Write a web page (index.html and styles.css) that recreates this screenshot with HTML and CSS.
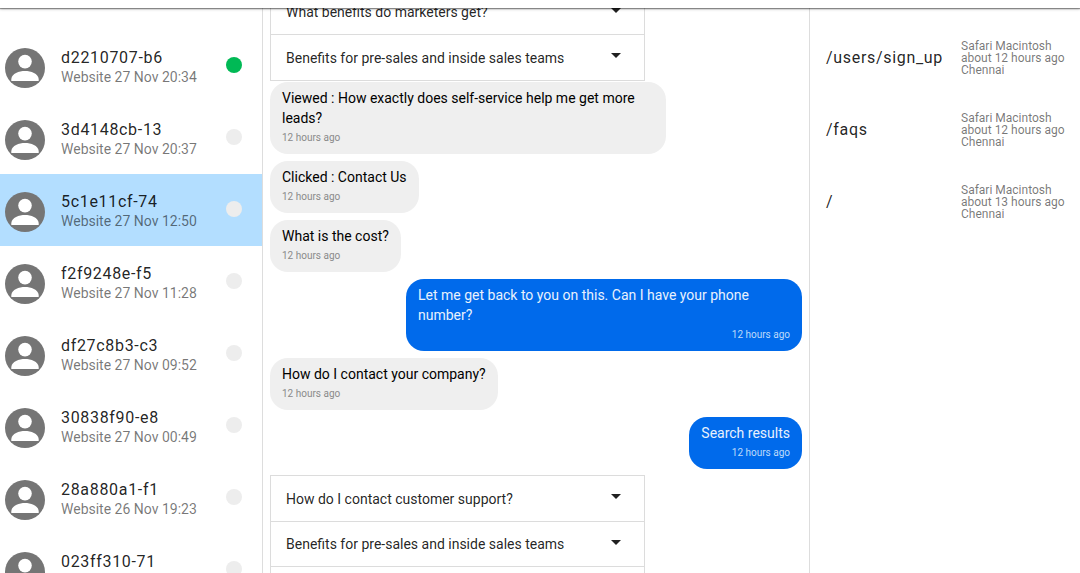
FILE: index.html
```html
<!DOCTYPE html>
<html lang="en">
<head>
<meta charset="utf-8">
<title>Conversations</title>
<link rel="stylesheet" href="styles.css">
</head>
<body>
<svg class="defs" aria-hidden="true">
  <symbol id="avatar" viewBox="0 0 40 40">
    <circle cx="20" cy="20" r="20" fill="#757575"/>
    <circle cx="20" cy="13.6" r="6.8" fill="#fff"/>
    <path d="M6.3 33v-2C6.8 25.6 14 23 20 23s13.2 2.600 13.700 8v2z" fill="#fff"/>
  </symbol>
  <symbol id="caret" viewBox="0 0 10 5"><path d="M0 0h10L5 5z" fill="#212121"/></symbol>
</svg>
<header class="topbar"></header>
<main class="layout">
  <nav class="visitors">
    <div class="visitor"><svg class="avatar"><use href="#avatar"/></svg><div class="who"><div class="name">d2210707-b6</div><div class="sub">Website 27 Nov 20:34</div></div><span class="dot online"></span></div>
    <div class="visitor"><svg class="avatar"><use href="#avatar"/></svg><div class="who"><div class="name">3d4148cb-13</div><div class="sub">Website 27 Nov 20:37</div></div><span class="dot"></span></div>
    <div class="visitor selected"><svg class="avatar"><use href="#avatar"/></svg><div class="who"><div class="name">5c1e11cf-74</div><div class="sub">Website 27 Nov 12:50</div></div><span class="dot"></span></div>
    <div class="visitor"><svg class="avatar"><use href="#avatar"/></svg><div class="who"><div class="name">f2f9248e-f5</div><div class="sub">Website 27 Nov 11:28</div></div><span class="dot"></span></div>
    <div class="visitor"><svg class="avatar"><use href="#avatar"/></svg><div class="who"><div class="name">df27c8b3-c3</div><div class="sub">Website 27 Nov 09:52</div></div><span class="dot"></span></div>
    <div class="visitor"><svg class="avatar"><use href="#avatar"/></svg><div class="who"><div class="name">30838f90-e8</div><div class="sub">Website 27 Nov 00:49</div></div><span class="dot"></span></div>
    <div class="visitor"><svg class="avatar"><use href="#avatar"/></svg><div class="who"><div class="name">28a880a1-f1</div><div class="sub">Website 26 Nov 19:23</div></div><span class="dot"></span></div>
    <div class="visitor"><svg class="avatar"><use href="#avatar"/></svg><div class="who"><div class="name">023ff310-71</div></div><span class="dot"></span></div>
  </nav>
  <section class="chat">
    <div class="faq faq-scrolled">
      <div class="question"><span>What benefits do marketers get?</span><svg class="caret"><use href="#caret"/></svg></div>
      <div class="question"><span>Benefits for pre-sales and inside sales teams</span><svg class="caret"><use href="#caret"/></svg></div>
    </div>
    <div class="messages">
      <div class="bubble wide"><p>Viewed : How exactly does self-service help me get more leads?</p><time>12 hours ago</time></div>
      <div class="bubble"><p>Clicked : Contact Us</p><time>12 hours ago</time></div>
      <div class="bubble"><p>What is the cost?</p><time>12 hours ago</time></div>
      <div class="bubble reply wide"><p>Let me get back to you on this. Can I have your phone number?</p><time>12 hours ago</time></div>
      <div class="bubble"><p>How do I contact your company?</p><time>12 hours ago</time></div>
      <div class="bubble reply"><p>Search results</p><time>12 hours ago</time></div>
    </div>
    <div class="faq">
      <div class="question"><span>How do I contact customer support?</span><svg class="caret"><use href="#caret"/></svg></div>
      <div class="question short"><span>Benefits for pre-sales and inside sales teams</span><svg class="caret"><use href="#caret"/></svg></div>
      <div class="question"></div>
    </div>
  </section>
  <aside class="visits">
    <div class="visit"><div class="path">/users/sign_up</div><div class="meta">Safari Macintosh<br>about 12 hours ago<br>Chennai</div></div>
    <div class="visit"><div class="path">/faqs</div><div class="meta">Safari Macintosh<br>about 12 hours ago<br>Chennai</div></div>
    <div class="visit"><div class="path">/</div><div class="meta">Safari Macintosh<br>about 13 hours ago<br>Chennai</div></div>
  </aside>
</main>
</body>
</html>
```
FILE: styles.css
```css
* { box-sizing: border-box; }
body {
  margin: 0;
  height: 573px;
  overflow: hidden;
  display: flex;
  flex-direction: column;
  background: #fff;
  color: rgba(0, 0, 0, .87);
  font-family: Roboto, sans-serif;
  font-size: 14px;
}
p { margin: 0; }
.defs { position: absolute; width: 0; height: 0; }
.topbar {
  position: relative;
  z-index: 1;
  flex: none;
  height: 8px;
  background: #fff;
  box-shadow: 0 1px 1px rgba(0, 0, 0, .35), 0 1px 3px rgba(0, 0, 0, .3);
}
.layout {
  flex: 1;
  min-height: 0;
  display: grid;
  grid-template-columns: 262px 548px 1fr;
  overflow: hidden;
}
.visitors { padding-top: 22px; }
.visitor {
  display: flex;
  align-items: flex-start;
  height: 72px;
  padding: 0 20px 0 5px;
}
.selected { background: #b3deff; }
.avatar { width: 40px; height: 40px; margin-top: 18px; flex: none; }
.who { flex: 1; padding: 16px 0 0 16px; }
.name { font-size: 16px; line-height: 24px; letter-spacing: .68px; }
.sub { line-height: 20px; margin-top: -3px; color: rgba(0, 0, 0, .54); }
.dot { width: 16px; height: 16px; margin-top: 27px; border-radius: 50%; background: #ededed; }
.online { background: #00b955; }

.chat {
  min-height: 0;
  padding: 0 7px;
  border-left: 1px solid #ddd;
  border-right: 1px solid #ddd;
  overflow: hidden;
}
.faq { width: 375px; border: 1px solid #dcdcdc; border-top: 0; }
.faq-scrolled { margin-top: -19px; }
.faq-scrolled .question:first-child { height: 45px; }
.question {
  display: flex;
  align-items: center;
  justify-content: space-between;
  height: 46px;
  padding: 0 23px 0 15px;
  border-top: 1px solid #dcdcdc;
}
.question span { line-height: 20px; }
.short { height: 45px; }
.caret { width: 10px; height: 5px; margin-top: -4px; }
.messages {
  display: flex;
  flex-direction: column;
  align-items: flex-start;
  gap: 7px;
  padding: 1px 0 6px;
}
.bubble {
  padding: 6px 12px;
  border-radius: 18px;
  background: #efefef;
  color: #000;
}
.bubble p { line-height: 20px; }
.wide { width: 396px; }
.bubble time { display: block; line-height: 20px; font-size: 10px; color: #8a8a8a; }
.reply { align-self: flex-end; background: #006aeb; color: #e8f1fd; }
.reply time { text-align: right; color: #bfdafa; }

.visits { padding-top: 22px; }
.visit { display: flex; height: 72px; padding-left: 16px; }
.path { width: 135px; padding-top: 16px; font-size: 16px; line-height: 24px; letter-spacing: .68px; }
.meta { padding-top: 10px; font-size: 12px; line-height: 12px; color: rgba(0, 0, 0, .54); }
```
